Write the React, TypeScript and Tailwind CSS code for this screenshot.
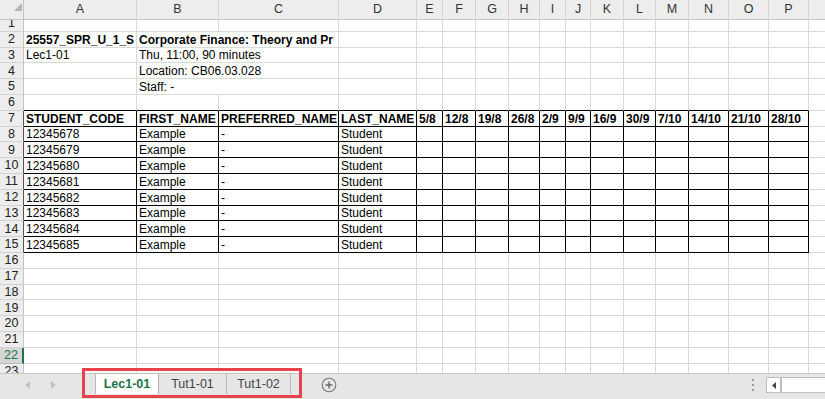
import React from "react";

const LETTERS = ["A", "B", "C", "D", "E", "F", "G", "H", "I", "J", "K", "L", "M", "N", "O", "P", ""];

const HEADINGS = [
  "STUDENT_CODE",
  "FIRST_NAME",
  "PREFERRED_NAME",
  "LAST_NAME",
  "5/8",
  "12/8",
  "19/8",
  "26/8",
  "2/9",
  "9/9",
  "16/9",
  "30/9",
  "7/10",
  "14/10",
  "21/10",
  "28/10",
];

const STUDENTS = ["12345678", "12345679", "12345680", "12345681", "12345682", "12345683", "12345684", "12345685"];

const gridCols =
  "grid grid-cols-[24px_113px_82px_120px_78px_26px_33px_33px_31px_26px_25px_33px_32px_33px_40px_40px_40px_60px]";

type CellProps = {
  text?: string;
  bold?: boolean;
  table?: boolean;
  topEdge?: boolean;
  span?: boolean;
};

function Cell({ text, bold, table, topEdge, span }: CellProps) {
  return (
    <div
      className={`flex items-end overflow-hidden whitespace-nowrap border-b border-r px-[2px] pb-[1px] leading-none ${
        table ? "border-r-black border-b-black" : "border-r-[#dadada] border-b-[#dadada]"
      } ${topEdge ? "border-b-black" : ""} ${span ? "col-span-2" : ""} ${bold ? "font-bold" : ""}`}
    >
      {text}
    </div>
  );
}

function RowHead({ n, dark, active }: { n: number; dark?: boolean; active?: boolean }) {
  return (
    <div
      className={`flex items-end justify-center border-b pb-[1px] leading-none text-[12.5px] ${
        active
          ? "border-b-[#b8b8b8] border-r-2 border-r-[#217346] bg-[#d6d6d6] text-[#217346]"
          : `border-b-[#d2d2d2] border-r bg-[#ededed] text-[#222] ${dark ? "border-r-[#555]" : "border-r-[#c4c4c4]"}`
      }`}
    >
      {n}
    </div>
  );
}

function renderRow(r: number) {
  const cells: React.ReactNode[] = [];
  if (r === 2) {
    cells.push(<Cell key="a" text="25557_SPR_U_1_S" bold />);
    cells.push(<Cell key="b" text="Corporate Finance: Theory and Pr" bold span />);
  } else if (r === 3) {
    cells.push(<Cell key="a" text="Lec1-01" />);
    cells.push(<Cell key="b" text="Thu, 11:00, 90 minutes" span />);
  } else if (r === 4) {
    cells.push(<Cell key="a" />);
    cells.push(<Cell key="b" text="Location: CB06.03.028" span />);
  } else if (r === 5) {
    cells.push(<Cell key="a" />);
    cells.push(<Cell key="b" text="Staff: -" span />);
  }
  const start = cells.length === 0 ? 0 : 3;
  for (let c = start; c < 17; c++) {
    const inTable = c < 16 && r >= 7 && r <= 15;
    let text: string | undefined;
    if (r === 7 && c < 16) text = HEADINGS[c];
    if (r >= 8 && r <= 15) {
      if (c === 0) text = STUDENTS[r - 8];
      if (c === 1) text = "Example";
      if (c === 2) text = "-";
      if (c === 3) text = "Student";
    }
    cells.push(
      <Cell key={c} text={text} bold={r === 7} table={inTable} topEdge={r === 6 && c < 16} />
    );
  }
  return (
    <div key={r} className={`${gridCols} h-[15.8px]`}>
      <RowHead n={r} dark={r >= 7 && r <= 15} active={r === 22} />
      {cells}
    </div>
  );
}

export default function App() {
  const rows = Array.from({ length: 23 }, (_, i) => i + 1);
  return (
    <div className="relative flex h-[399px] w-[825px] flex-col overflow-hidden bg-white font-['Liberation_Sans',Arial,sans-serif] text-[12px] text-black">
      <div className="h-[373px] overflow-hidden">
        <div className={`${gridCols} h-[16px]`}>
          <div className="relative border-b border-r border-[#c4c4c4] bg-[#ededed]">
            <svg className="absolute left-[14px] top-[3px]" width="9" height="9" viewBox="0 0 9 9">
              <polygon points="8,0 8,8 0,8" fill="#b5b5b5" />
            </svg>
          </div>
          {LETTERS.map((l, i) => (
            <div
              key={i}
              className="flex items-center justify-center border-b border-r border-b-[#c4c4c4] border-r-[#d2d2d2] bg-[#ededed] text-[12.5px] text-[#333]"
            >
              {l}
            </div>
          ))}
        </div>
        {rows.map(renderRow)}
      </div>

      <div className="relative flex h-[26px] items-start border-t border-[#c6c6c6] bg-[#e6e6e6] text-[12.5px]">
        <div className="flex h-[22px] w-[95px] items-center">
          <svg className="ml-[25px]" width="5" height="8" viewBox="0 0 5 8">
            <polygon points="5,0 5,8 0,4" fill="#c2c2c2" />
          </svg>
          <svg className="ml-[21px]" width="5" height="8" viewBox="0 0 5 8">
            <polygon points="0,0 0,8 5,4" fill="#c2c2c2" />
          </svg>
        </div>
        <div className="flex h-[20px] border-l border-[#b8b8b8]">
          <div className="flex w-[62px] items-center justify-center bg-white font-bold text-[#217346]">Lec1-01</div>
          <div className="flex w-[68px] items-center justify-center border-l border-[#b8b8b8] text-[#444]">Tut1-01</div>
          <div className="flex w-[65px] items-center justify-center border-x border-[#b8b8b8] text-[#444]">Tut1-02</div>
        </div>
        <div className="ml-[30px] flex h-[22px] items-center">
          <svg width="16" height="16" viewBox="0 0 16 16">
            <circle cx="8" cy="8" r="6.8" fill="none" stroke="#777" strokeWidth="1.1" />
            <path d="M8 4.5v7M4.5 8h7" stroke="#666" strokeWidth="1.4" />
          </svg>
        </div>
        <div className="ml-auto flex h-[22px] items-center">
          <div className="mr-[12px] flex flex-col gap-[3px]">
            <span className="h-[2px] w-[2px] bg-[#9a9a9a]" />
            <span className="h-[2px] w-[2px] bg-[#9a9a9a]" />
            <span className="h-[2px] w-[2px] bg-[#9a9a9a]" />
          </div>
          <div className="flex h-[16px] w-[15px] items-center justify-center border border-[#bdbdbd] bg-white">
            <svg width="4" height="7" viewBox="0 0 4 7">
              <polygon points="4,0 4,7 0,3.5" fill="#444" />
            </svg>
          </div>
          <div className="h-[16px] w-[44px] border-y border-l border-[#bdbdbd] bg-white" />
        </div>
      </div>

      <div className="absolute left-[82px] top-[368px] h-[30px] w-[220px] border-[3px] border-[#e8434b]" />
    </div>
  );
}
